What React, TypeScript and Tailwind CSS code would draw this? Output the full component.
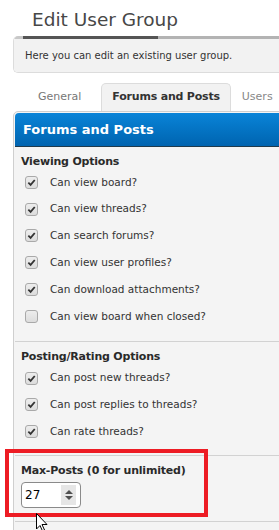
const viewing = [
  { label: 'Can view board?', checked: true },
  { label: 'Can view threads?', checked: true },
  { label: 'Can search forums?', checked: true },
  { label: 'Can view user profiles?', checked: true },
  { label: 'Can download attachments?', checked: true },
  { label: 'Can view board when closed?', checked: false },
]

const posting = [
  { label: 'Can post new threads?', checked: true },
  { label: 'Can post replies to threads?', checked: true },
  { label: 'Can rate threads?', checked: true },
]

function CheckRow({ label, checked }: { label: string; checked: boolean }) {
  return (
    <div className="flex h-[26.8px] items-center">
      <span className="ml-[4px] flex size-[13px] shrink-0 items-center justify-center rounded-[3px] border border-[#a9a9a9] bg-gradient-to-b from-[#ededed] to-[#dcdcdc]">
        {checked && (
          <svg viewBox="0 0 10 10" className="size-[9px]">
            <path d="M1.5 5.2 L4 7.6 L8.6 2.2" fill="none" stroke="#333" strokeWidth="2" />
          </svg>
        )}
      </span>
      <span className="ml-[12px] whitespace-nowrap text-[10.5px] text-[#333]">{label}</span>
    </div>
  )
}

export default function App() {
  return (
    <div className="relative h-[530px] w-[279px] overflow-hidden bg-white font-['DejaVu_Sans',sans-serif]">
      <h1 className="whitespace-nowrap pl-[32px] pt-[9px] text-[18.5px] leading-[22px] text-[#474747]">Edit User Group</h1>

      <div className="ml-[13px] mt-[5px] w-[300px] overflow-hidden rounded-[5px] border-b border-l border-[#dcdcdc]">
        <div className="flex h-[3px]">
          <div className="w-[9px] bg-[#c8c8c8]" />
          <div className="w-[135px] bg-[#555]" />
          <div className="flex-1 bg-[#b3b3b3]" />
        </div>
        <div className="flex h-[33px] items-center whitespace-nowrap bg-[#f2f2f2] pl-[11px] text-[10px] text-[#333]">
          Here you can edit an existing user group.
        </div>
      </div>

      <div className="mt-[10px] flex h-[28px] items-end whitespace-nowrap text-[11px]">
        <div className="ml-[38px] flex h-[28px] shrink-0 items-center text-[#777]">General</div>
        <div className="ml-[20px] flex h-[28px] shrink-0 items-center rounded-t-[5px] border border-b-0 border-[#dcdcdc] bg-[#f2f2f2] px-[10px] font-bold tracking-[-0.2px] text-[#333]">
          Forums and Posts
        </div>
        <div className="ml-[11px] flex h-[28px] shrink-0 items-center text-[#888]">Users</div>
      </div>

      <div className="ml-[13px] w-[300px] rounded-t-[5px] border border-[#cfcfcf] bg-[#f4f4f4] p-px pb-0">
        <div className="flex h-[34px] items-center whitespace-nowrap rounded-t-[4px] border-b border-[#1f3a4c] bg-gradient-to-b from-[#0a84d8] to-[#0064b0] pl-[8px] text-[13px] font-bold text-white">
          Forums and Posts
        </div>

        <div className="pl-[6px] pt-[7px] pb-[11px]">
          <div className="text-[11px] font-bold leading-[15px] tracking-[-0.2px] text-[#2a2a2a]">Viewing Options</div>
          {viewing.map((r) => (
            <CheckRow key={r.label} {...r} />
          ))}
        </div>

        <div className="border-t border-[#d2d2d2] pl-[6px] pt-[7px] pb-[10px]">
          <div className="mb-px text-[11px] font-bold leading-[15px] tracking-[-0.2px] text-[#2a2a2a]">Posting/Rating Options</div>
          {posting.map((r) => (
            <CheckRow key={r.label} {...r} />
          ))}
        </div>

        <div className="border-t border-[#d2d2d2] pl-[6px] pt-[7px] pb-[13px]">
          <div className="whitespace-nowrap text-[11px] font-bold leading-[15px] tracking-[-0.2px] text-[#2a2a2a]">Max-Posts (0 for unlimited)</div>
          <div className="mt-[4px] flex h-[26px] w-[60px] items-center rounded-[4px] border border-[#8a8a8a] bg-white">
            <span className="ml-[3px] flex-1 text-[12px] text-black">27</span>
            <span className="mr-[4px] flex h-[20px] w-[15px] flex-col items-center justify-center gap-[2px] bg-[#e6e6e6]">
              <svg viewBox="0 0 8 4" className="h-[4px] w-[8px]">
                <path d="M0 4 L4 0 L8 4 Z" fill="#505050" />
              </svg>
              <svg viewBox="0 0 8 4" className="h-[4px] w-[8px]">
                <path d="M0 0 L4 4 L8 0 Z" fill="#505050" />
              </svg>
            </span>
          </div>
        </div>

        <div className="h-[20px] border-t border-[#d2d2d2]" />
      </div>

      <div className="absolute left-[5px] top-[449px] h-[68px] w-[203px] border-[4px] border-[#ed1c24]" />

      <svg viewBox="0 0 12 19" className="absolute left-[36px] top-[513px] h-[19px] w-[12px]">
        <path d="M0.5 0.5 L0.5 16 L4 12.5 L6.5 18 L8.5 17 L6 11.5 L11 11.5 Z" fill="white" stroke="black" strokeWidth="1" />
      </svg>
    </div>
  )
}
